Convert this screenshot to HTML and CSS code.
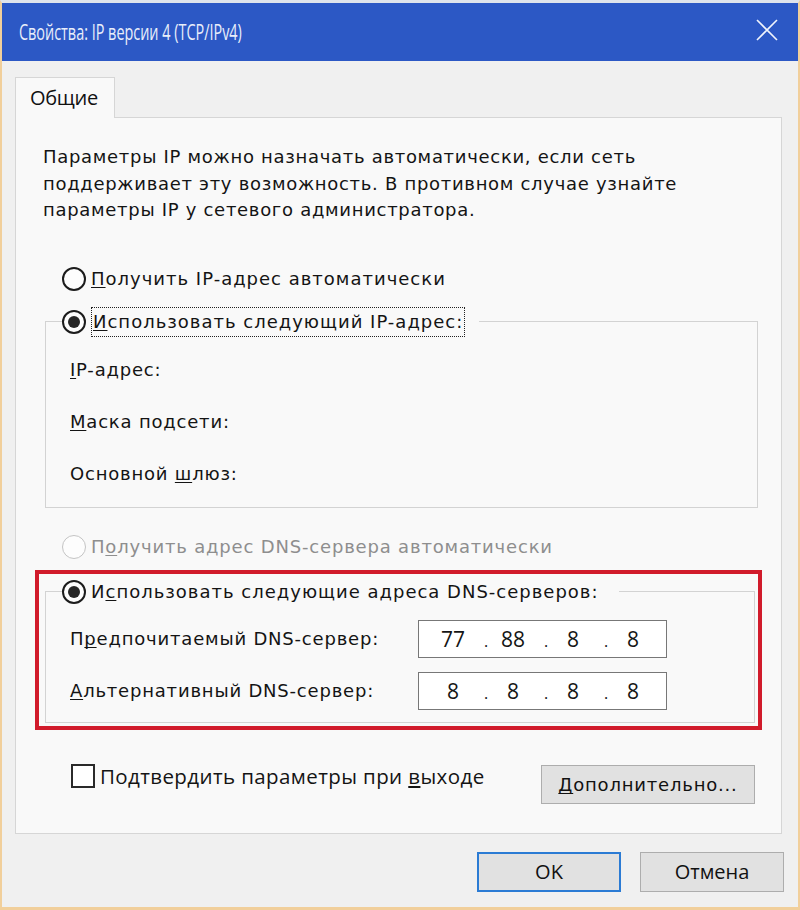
FILE: index.html
```html
<!DOCTYPE html>
<html lang="ru">
<head>
<meta charset="utf-8">
<title>Свойства: IP версии 4 (TCP/IPv4)</title>
<link rel="stylesheet" href="styles.css">
</head>
<body>
<div class="window">
  <div class="titlebar">
    <span class="title">Свойства: IP версии 4 (TCP/IPv4)</span>
    <svg class="close" width="22" height="22" viewBox="0 0 22 22" aria-label="Закрыть">
      <path d="M1 1 L21 21 M21 1 L1 21" stroke="#f0f4fc" stroke-width="1.6" fill="none"/>
    </svg>
  </div>
  <div class="client">
    <div class="tabs"><div class="tab">Общие</div></div>
    <div class="panel">
      <p class="intro">Параметры IP можно назначать автоматически, если сеть<br>поддерживает эту возможность. В противном случае узнайте<br>параметры IP у сетевого администратора.</p>

      <div class="radio-row standalone">
        <span class="radio"></span><span class="label"><u>П</u>олучить IP-адрес автоматически</span>
      </div>

      <fieldset class="group group-ip">
        <legend class="legend legend-ip">
          <span class="radio checked"></span><span class="label focus"><u>И</u>спользовать следующий IP-адрес:</span>
        </legend>
        <div class="ip-rows">
          <div class="field-row"><span class="field-label"><u>I</u>P-адрес:</span></div>
          <div class="field-row"><span class="field-label"><u>М</u>аска подсети:</span></div>
          <div class="field-row"><span class="field-label">Основной <u>ш</u>люз:</span></div>
        </div>
      </fieldset>

      <div class="radio-row standalone disabled-row">
        <span class="radio disabled"></span><span class="label disabled-text">П<u>о</u>лучить адрес DNS-сервера автоматически</span>
      </div>

      <div class="highlight">
        <fieldset class="group group-dns">
          <legend class="legend legend-dns">
            <span class="radio checked"></span><span class="label">И<u>с</u>пользовать следующие адреса DNS-серверов:</span>
          </legend>
          <div class="dns-rows">
            <div class="dns-row">
              <span class="field-label">П<u>р</u>едпочитаемый DNS-сервер:</span>
              <div class="ip-box"><span class="octet">77</span><span class="dot">.</span><span class="octet">88</span><span class="dot">.</span><span class="octet">8</span><span class="dot">.</span><span class="octet">8</span></div>
            </div>
            <div class="dns-row">
              <span class="field-label"><u>А</u>льтернативный DNS-сервер:</span>
              <div class="ip-box"><span class="octet">8</span><span class="dot">.</span><span class="octet">8</span><span class="dot">.</span><span class="octet">8</span><span class="dot">.</span><span class="octet">8</span></div>
            </div>
          </div>
        </fieldset>
      </div>

      <div class="bottom-row">
        <div class="check-row">
          <span class="checkbox"></span><span class="check-label">Подтвердить параметры при <u>в</u>ыходе</span>
        </div>
        <button class="btn btn-advanced" type="button"><u>Д</u>ополнительно...</button>
      </div>
    </div>
    <div class="footer">
      <button class="btn btn-dialog btn-default" type="button">OK</button>
      <button class="btn btn-dialog" type="button">Отмена</button>
    </div>
  </div>
</div>
</body>
</html>
```

FILE: styles.css
```css
* { box-sizing: border-box; }

html, body {
  margin: 0;
  padding: 0;
  background: #f0f0f0;
}

.window {
  width: 800px;
  height: 910px;
  display: flex;
  flex-direction: column;
  background: #f0f0f0;
  border-left: 2px solid #f1cf9b;
  border-right: 2px solid #f1cf9b;
  border-bottom: 3px solid #f1cf9b;
  border-top: 3px solid #dfe4ec;
  font-family: "DejaVu Sans", sans-serif;
  color: #141414;
}

/* ---------- title bar ---------- */
.titlebar {
  height: 58px;
  flex: none;
  background: #2c58c5;
  display: flex;
  align-items: center;
  justify-content: space-between;
  padding: 0 20px 0 17px;
}

.title {
  display: inline-block;
  font-family: "Open Sans", sans-serif;
  font-size: 22px;
  color: #e9eefa;
  transform: scaleX(0.655);
  transform-origin: left center;
  white-space: nowrap;
  margin-top: -2px;
}

.close {
  display: block;
  margin-top: -4px;
}

/* ---------- client area ---------- */
.client {
  flex: 1;
  padding: 16px 16px 0 13px;
  display: flex;
  flex-direction: column;
}

.tabs {
  display: flex;
  height: 40px;
}

.tab {
  position: relative;
  z-index: 1;
  width: 100px;
  height: 41px;
  background: #f9f9f9;
  border: 1px solid #d6d6d6;
  border-bottom: none;
  font-family: "Open Sans", sans-serif;
  font-size: 20px;
  color: #111;
  padding: 6px 0 0 14px;
  letter-spacing: -0.3px;
}

.panel {
  background: #f9f9f9;
  border: 1px solid #d6d6d6;
  padding: 26px 0 29px 0;
  display: flex;
  flex-direction: column;
}

.intro {
  margin: 0 0 0 27px;
  font-size: 18px;
  line-height: 26.5px;
  letter-spacing: 0.7px;
}

/* ---------- radios ---------- */
.radio-row {
  display: flex;
  align-items: center;
  height: 30px;
}

.standalone {
  margin-left: 46px;
}

.radio-row:first-of-type {
  margin-top: 40px;
}

.disabled-row {
  margin-top: 24px;
}

.radio {
  width: 24px;
  height: 24px;
  flex: none;
  border-radius: 50%;
  border: 2px solid #1c1c1c;
  background: #fdfdfd;
  display: inline-flex;
  align-items: center;
  justify-content: center;
}

.radio.checked::after {
  content: "";
  width: 12px;
  height: 12px;
  border-radius: 50%;
  background: #262626;
}

.radio.disabled {
  border-color: #c4c4c4;
  border-width: 1.5px;
}

.label {
  font-size: 18px;
  line-height: 28px;
  margin-left: 5px;
  letter-spacing: 1px;
  white-space: nowrap;
}

.label.focus {
  outline: 1px dotted #222;
  outline-offset: -1px;
  padding: 0 2px;
  height: 30px;
  line-height: 30px;
}

.disabled-text {
  color: #8e8e8e;
  letter-spacing: 0.82px;
}

u {
  text-decoration-skip-ink: none;
  text-underline-offset: 2px;
}

/* ---------- group boxes ---------- */
.group {
  margin: 0;
  border: 1px solid #d3d3d3;
  padding: 0 0 18px 16px;
  min-width: 0;
}

.legend {
  display: flex;
  align-items: center;
  height: 30px;
  padding: 0 14px 0 0;
}

.group-ip {
  margin: 13px 23px 0 29px;
}

.ip-rows {
  display: flex;
  flex-direction: column;
  gap: 22px;
  margin-top: 18px;
}

.field-row {
  height: 30px;
  display: flex;
  align-items: center;
  margin-left: 8px;
}

.field-label {
  font-size: 18px;
  letter-spacing: 0.8px;
  white-space: nowrap;
}

/* ---------- red highlight ---------- */
.highlight {
  margin: 8px 19px 0 19px;
  border: 4px solid #d11b2b;
  padding: 3px 3px 3px 6px;
}

.group-dns {
  padding-bottom: 12px;
}

.legend-dns {
  padding-right: 20px;
}

.dns-rows {
  display: flex;
  flex-direction: column;
  gap: 14px;
  margin-top: 13px;
}

.dns-row {
  display: grid;
  grid-template-columns: 348px 249px;
  align-items: center;
  height: 38px;
  margin-left: 8px;
}

.ip-box {
  height: 38px;
  background: #ffffff;
  border: 1px solid #777;
  display: flex;
  align-items: center;
  padding-left: 8px;
  font-family: "Open Sans", sans-serif;
  font-size: 21px;
  color: #151515;
}

.octet {
  width: 52px;
  text-align: center;
}

.dot {
  width: 8px;
  margin-left: 3px;
  margin-right: -3px;
  text-align: center;
  font-size: 16px;
  padding-top: 4px;
}

/* ---------- bottom row ---------- */
.bottom-row {
  display: flex;
  justify-content: space-between;
  align-items: flex-start;
  margin: 34px 26px 0 55px;
}

.check-row {
  display: flex;
  align-items: center;
  height: 24px;
}

.checkbox {
  width: 24px;
  height: 24px;
  border: 2px solid #2a2a2a;
  background: #fff;
}

.check-label {
  margin-left: 5px;
  font-family: "Open Sans", sans-serif;
  font-size: 20.5px;
  letter-spacing: 0.4px;
  white-space: nowrap;
}

.btn {
  background: #e1e1e1;
  border: 1px solid #adadad;
  color: #111;
  padding: 0;
  margin: 0;
}

.btn-advanced {
  width: 214px;
  height: 39px;
  margin-top: 1px;
  font-family: "DejaVu Sans", sans-serif;
  font-size: 18px;
  letter-spacing: 0.8px;
}

/* ---------- footer ---------- */
.footer {
  display: flex;
  justify-content: flex-end;
  gap: 19px;
  margin: 18px -2px 0 0;
}

.btn-dialog {
  width: 144px;
  height: 40px;
  font-family: "Open Sans", sans-serif;
  font-size: 20px;
}

.btn-default {
  border: 2px solid #2b7bd4;
}
```
